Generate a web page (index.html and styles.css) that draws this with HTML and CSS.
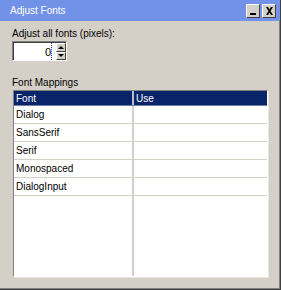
FILE: index.html
```html
<!DOCTYPE html>
<html lang="en">
<head>
    <meta charset="UTF-8">
    <title>Adjust Fonts</title>
    <link rel="stylesheet" href="styles.css">
</head>
<body>

    <!-- Window -->
    <div class="window">
        <!-- Title bar -->
        <div class="titlebar">
            <span class="title">Adjust Fonts</span>
            <div class="title-buttons">
                <div class="tbtn"><span class="min-glyph"></span></div>
                <div class="tbtn">
                    <svg width="9" height="8" viewBox="0 0 9 8"><path d="M1 0h2l1.5 2.5L6 0h2L5.5 4 8 8H6L4.5 5.5 3 8H1l2.5-4z" fill="#000"/></svg>
                </div>
            </div>
        </div>

        <div class="content">
            <div class="label">Adjust all fonts (pixels):</div>

            <!-- Spinner -->
            <div class="spinner">
                <div class="spin-field">
                    <span class="caret"></span>
                    <span class="spin-value">0</span>
                </div>
                <div class="spin-buttons">
                    <div class="spin-btn"><span class="arrow-up"></span></div>
                    <div class="spin-btn"><span class="arrow-down"></span></div>
                </div>
            </div>

            <div class="label mappings-label">Font Mappings</div>

            <!-- Mappings table -->
            <div class="table-box">
                <div class="row header">
                    <div class="cell col-font">Font</div>
                    <div class="cell col-use">Use</div>
                </div>
                <div class="row">
                    <div class="cell col-font">Dialog</div>
                    <div class="cell col-use"></div>
                </div>
                <div class="row">
                    <div class="cell col-font">SansSerif</div>
                    <div class="cell col-use"></div>
                </div>
                <div class="row">
                    <div class="cell col-font">Serif</div>
                    <div class="cell col-use"></div>
                </div>
                <div class="row">
                    <div class="cell col-font">Monospaced</div>
                    <div class="cell col-use"></div>
                </div>
                <div class="row">
                    <div class="cell col-font">DialogInput</div>
                    <div class="cell col-use"></div>
                </div>
                <div class="row filler">
                    <div class="cell col-font"></div>
                    <div class="cell col-use"></div>
                </div>
            </div>
        </div>
    </div>

</body>
</html>
```

FILE: styles.css
```css
body {
    margin: 0;
    padding: 0;
    font-family: 'Liberation Sans', Arial, sans-serif;
    font-size: 10px;
    color: #000;
    background-color: #d4d0c8;
}

.window {
    width: 281px;
    height: 290px;
    box-sizing: border-box;
    background-color: #d4d0c8;
    border-right: 1px solid #404040;
    border-bottom: 1px solid #404040;
    box-shadow: inset -1px -1px 0 #808080;
    display: flex;
    flex-direction: column;
}

/* Title bar */
.titlebar {
    height: 21px;
    background-color: #7192e6;
    display: flex;
    align-items: center;
    justify-content: space-between;
    padding: 0 4px 0 10px;
    flex-shrink: 0;
}

.title {
    color: white;
    font-size: 10px;
}

.title-buttons {
    display: flex;
    gap: 2px;
}

.tbtn {
    width: 12px;
    height: 12px;
    background-color: #d4d0c8;
    border-top: 1px solid #fff;
    border-left: 1px solid #fff;
    border-right: 1px solid #404040;
    border-bottom: 1px solid #404040;
    display: flex;
    align-items: center;
    justify-content: center;
}

.min-glyph {
    width: 6px;
    height: 2px;
    background-color: #000;
    margin-top: 6px;
}

/* Content */
.content {
    flex: 1;
    display: flex;
    flex-direction: column;
    padding: 7px 10px 12px 12px;
}

.label {
    line-height: 12px;
}

.mappings-label {
    margin-top: 16px;
    margin-bottom: 1px;
}

/* Spinner */
.spinner {
    display: flex;
    width: 55px;
    height: 20px;
    margin-top: 1px;
    box-sizing: border-box;
    border-top: 1px solid #808080;
    border-left: 1px solid #808080;
    border-right: 1px solid #fff;
    border-bottom: 1px solid #fff;
    background-color: white;
}

.spin-field {
    flex: 1;
    position: relative;
    border-top: 1px solid #404040;
    border-left: 1px solid #404040;
    display: flex;
    align-items: center;
    justify-content: flex-end;
    padding-right: 5px;
}

.caret {
    position: absolute;
    right: 4px;
    top: 0;
    bottom: 0;
    border-left: 1px dotted #2040e0;
}

.spin-value {
    font-size: 11px;
}

.spin-buttons {
    width: 10px;
    display: flex;
    flex-direction: column;
    border-top: 1px solid #404040;
    background-color: white;
}

.spin-btn {
    flex: 1;
    background-color: #d4d0c8;
    border-top: 1px solid #fff;
    border-left: 1px solid #fff;
    border-right: 1px solid #404040;
    border-bottom: 1px solid #404040;
    display: flex;
    align-items: center;
    justify-content: center;
}

.arrow-up {
    width: 0;
    height: 0;
    border-left: 3px solid transparent;
    border-right: 3px solid transparent;
    border-bottom: 3px solid #000;
}

.arrow-down {
    width: 0;
    height: 0;
    border-left: 3px solid transparent;
    border-right: 3px solid transparent;
    border-top: 3px solid #000;
}

/* Table */
.table-box {
    flex: 1;
    display: flex;
    flex-direction: column;
    background-color: white;
    border-top: 1px solid #808080;
    border-left: 1px solid #808080;
    border-right: 1px solid #fff;
    border-bottom: 1px solid #fff;
    box-shadow: 1px 1px 0 #e8e6e2;
    margin-left: 1px;
    width: 253px;
}

.row {
    display: flex;
    height: 18px;
    border-bottom: 1px solid #d4d0c8;
    box-sizing: border-box;
}

.row.header {
    height: 15px;
    background-color: #0a246a;
    color: white;
    border-bottom: 1px solid #6f7ea8;
}

.row.filler {
    flex: 1;
    border-bottom: none;
}

.cell {
    display: flex;
    align-items: center;
    padding-left: 2px;
}

.col-font {
    width: 116px;
    border-right: 2px solid #d4d0c8;
}

.header .col-font {
    border-right: 2px solid #b8bccc;
}

.col-use {
    flex: 1;
}
```
